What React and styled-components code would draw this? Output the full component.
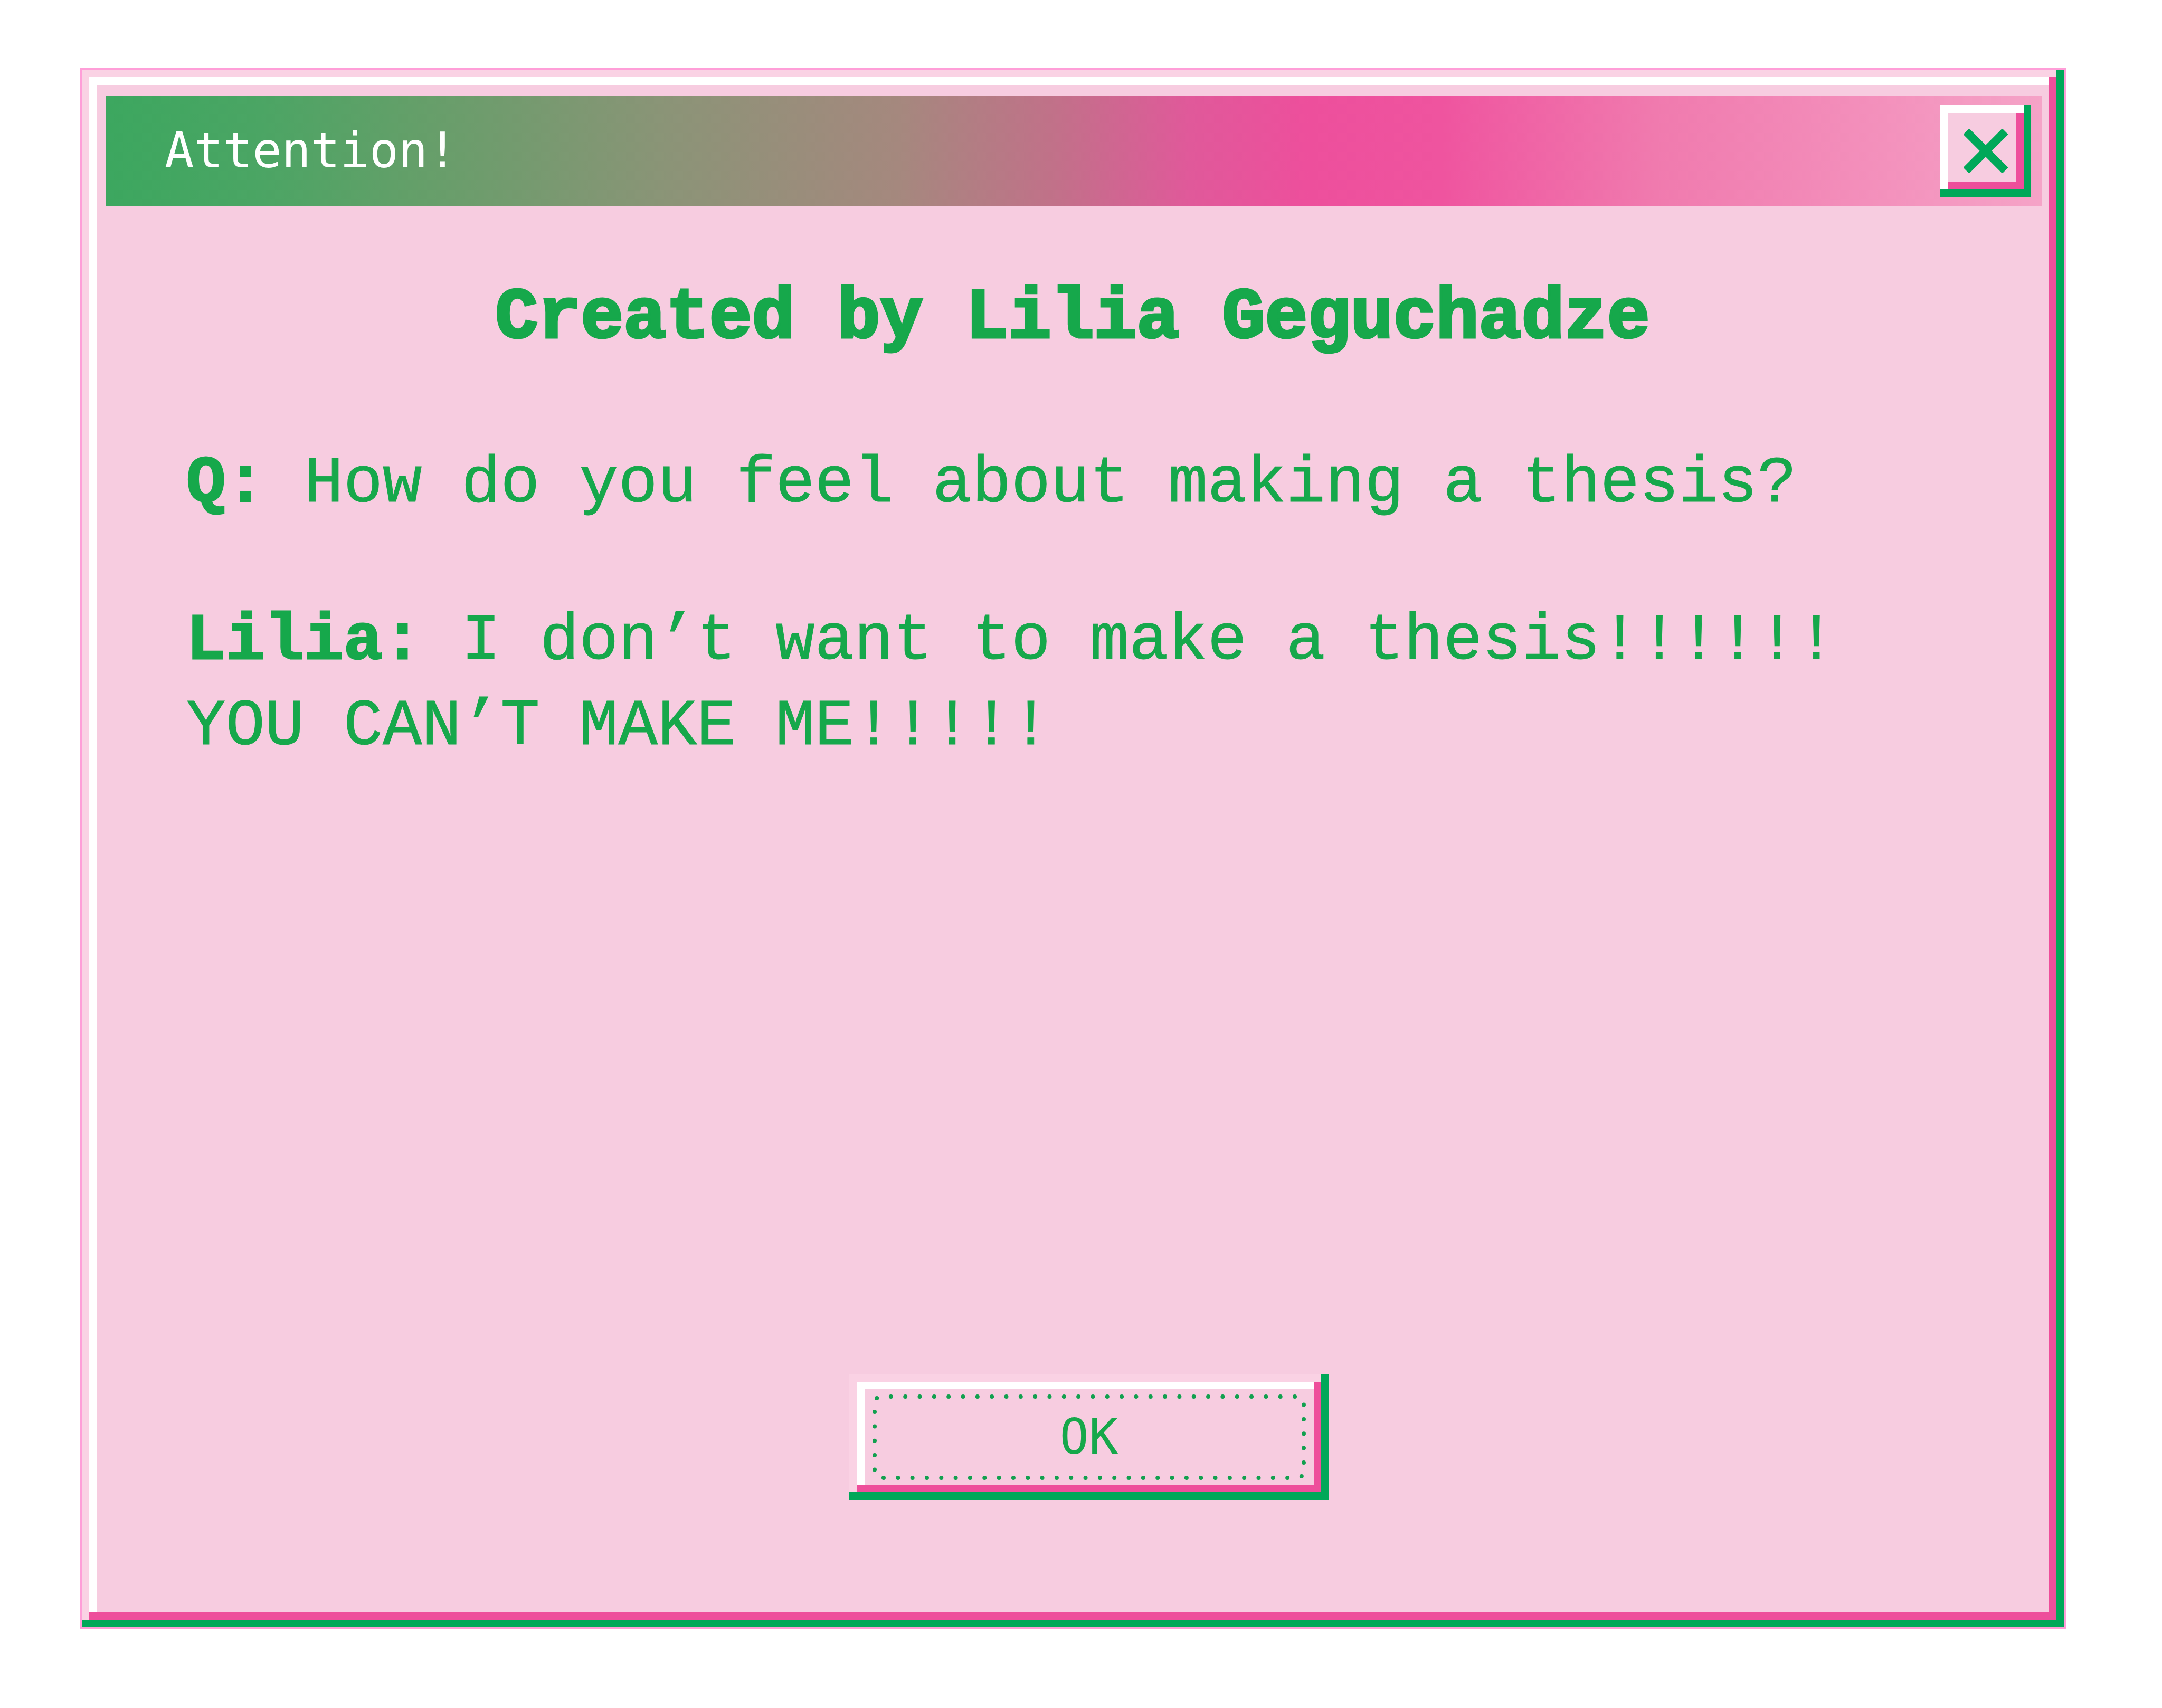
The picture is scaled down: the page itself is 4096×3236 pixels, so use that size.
import React from "react";
import styled, { createGlobalStyle } from "styled-components";

const GREEN = "#00a859";
const TEXT_GREEN = "#16a84b";
const MAGENTA = "#ee4e9b";
const PINK = "#f7cce0";
const PALE = "#fad2e4";
const CHROME_FONT = '"DejaVu Sans Mono", "Liberation Mono", monospace';
const BODY_FONT = '"Liberation Mono", "DejaVu Sans Mono", monospace';

const GlobalStyle = createGlobalStyle`
  *, *::before, *::after { box-sizing: border-box; }
  body { margin: 0; background: #ffffff; }
`;

const Page = styled.main`
  display: flex;
  min-height: 100vh;
  padding: 129px 181px 150px 152px;
  font-family: ${CHROME_FONT};
  color: ${TEXT_GREEN};
`;

const Dialog = styled.section`
  flex: 1;
  display: flex;
  flex-direction: column;
  padding: 29px 29px 28px 28px;
  border: 3px solid #ff9ed8;
  border-right-width: 5px;
  background: ${PINK};
  box-shadow:
    inset -14px -14px 0 ${GREEN},
    inset 13px 13px 0 ${PALE},
    inset -29px -28px 0 ${MAGENTA},
    inset 28px 29px 0 #ffffff;
`;

const TitleBar = styled.header`
  display: flex;
  align-items: center;
  justify-content: space-between;
  height: 209px;
  margin: 20px 13px 0 17px;
  padding: 0 20px 0 112px;
  background: linear-gradient(
    90deg,
    #3ca75f 0%,
    #4ba564 8%,
    #649f69 16%,
    #8b9477 29%,
    #a5887e 41%,
    #c17189 49%,
    #e0599a 56%,
    #ed4f9c 62%,
    #ef549f 69%,
    #f07aae 80%,
    #f38fbb 91%,
    #f5a3c7 100%
  );
`;

const Title = styled.h1`
  margin: 0;
  font-size: 92px;
  font-weight: 400;
  line-height: 120px;
  color: #ffffff;
`;

const BevelButton = styled.button`
  display: flex;
  align-items: center;
  justify-content: center;
  margin: 0;
  padding: 0;
  border: 0;
  background: ${PINK};
  color: ${TEXT_GREEN};
  font-family: inherit;
  cursor: pointer;
`;

const CloseButton = styled(BevelButton)`
  width: 172px;
  height: 174px;
  box-shadow:
    inset -14px -15px 0 ${GREEN},
    inset 14px 15px 0 #ffffff,
    inset -28px -29px 0 ${MAGENTA};
`;

const Content = styled.div`
  flex: 1;
  display: flex;
  flex-direction: column;
  padding: 124px 170px 213px;
`;

const Heading = styled.h2`
  margin: 0;
  font-family: ${BODY_FONT};
  font-size: 135px;
  font-weight: 700;
  line-height: 180px;
  text-align: center;
  -webkit-text-stroke: 5px currentColor;
`;

const Line = styled.p`
  margin: ${({ $gap }) => $gap}px 0 0;
  font-family: ${BODY_FONT};
  font-size: 124px;
  line-height: 162px;
  -webkit-text-stroke: 1px currentColor;

  strong {
    -webkit-text-stroke: 3px currentColor;
  }
`;

const Actions = styled.footer`
  display: flex;
  justify-content: center;
  margin-top: auto;
  padding-left: 62px;
`;

const OkButton = styled(BevelButton)`
  display: grid;
  place-items: center;
  width: 909px;
  height: 239px;
  font-size: 92px;
  line-height: 120px;
  box-shadow:
    inset -15px -15px 0 ${GREEN},
    inset 15px 15px 0 ${PALE},
    inset -29px -29px 0 ${MAGENTA},
    inset 29px 29px 0 #ffffff;

  > * {
    grid-area: 1 / 1;
  }
`;

const CloseIcon = () => (
  <svg width="84" height="84" viewBox="0 0 84 84" aria-hidden="true">
    <path d="M5 5L79 79M79 5L5 79" stroke={GREEN} strokeWidth="16" fill="none" />
  </svg>
);

const FocusDots = () => (
  <svg width="909" height="239" viewBox="0 0 909 239" aria-hidden="true">
    <rect
      x="48"
      y="43"
      width="813"
      height="154"
      rx="12"
      fill="none"
      stroke="#12a04f"
      strokeWidth="8"
      strokeLinecap="round"
      pathLength="70"
      strokeDasharray="0 1"
      strokeDashoffset="-0.69"
    />
  </svg>
);

export default function App() {
  return (
    <>
      <GlobalStyle />
      <Page>
        <Dialog role="dialog" aria-labelledby="dialog-title">
          <TitleBar>
            <Title id="dialog-title">Attention!</Title>
            <CloseButton type="button" aria-label="Close">
              <CloseIcon />
            </CloseButton>
          </TitleBar>
          <Content>
            <Heading>Created by Lilia Geguchadze</Heading>
            <Line $gap={142}>
              <strong>Q:</strong> How do you feel about making a thesis?
            </Line>
            <Line $gap={136}>
              <strong>Lilia:</strong> I don’t want to make a thesis!!!!!!
              <br />
              YOU CAN’T MAKE ME!!!!!
            </Line>
            <Actions>
              <OkButton type="button">
                <FocusDots />
                <span>OK</span>
              </OkButton>
            </Actions>
          </Content>
        </Dialog>
      </Page>
    </>
  );
}
